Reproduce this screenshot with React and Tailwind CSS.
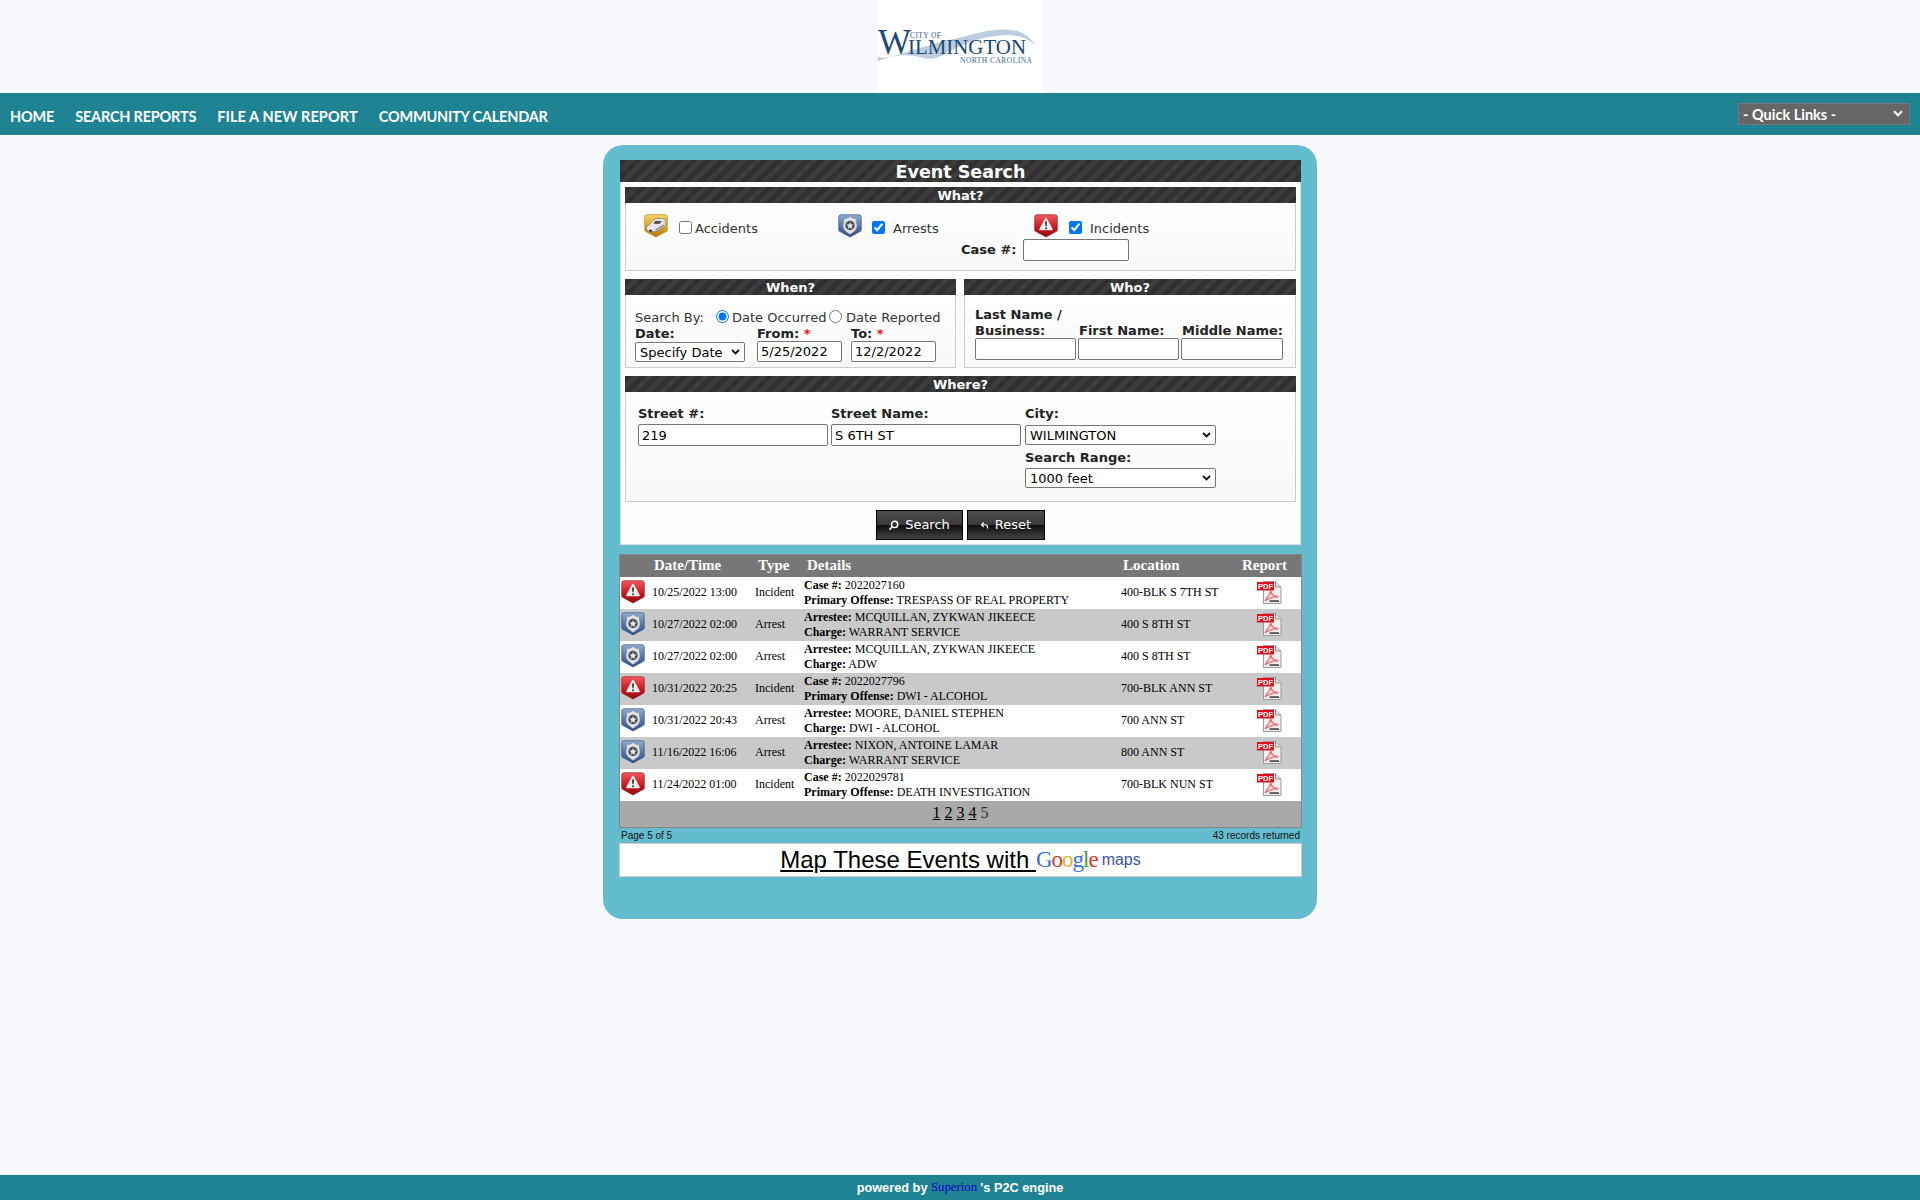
import React from "react";

const F = "font-['DejaVu_Sans','Verdana',sans-serif]";

function Shield({ kind, className }) {
  const c = {
    red: ["#f2585c", "#c8151d", "#8f0b11"],
    blue: ["#8dabd3", "#4d70a6", "#2f4b7a"],
    yellow: ["#f8d565", "#dc9f1c", "#a97608"],
  }[kind];
  const id = "grad-" + kind;
  return (
    <svg viewBox="0 0 24 24" className={className}>
      <defs>
        <linearGradient id={id} x1="0" y1="0" x2="0" y2="1">
          <stop offset="0" stopColor={c[0]} />
          <stop offset=".6" stopColor={c[1]} />
          <stop offset="1" stopColor={c[2]} />
        </linearGradient>
      </defs>
      <path d="M.7 3Q.7 .7 3 .7H21Q23.3 .7 23.3 3V16Q23.3 17 22 17.6L12 23L2 17.6Q.7 17 .7 16Z" fill={`url(#${id})`} stroke={c[2]} strokeWidth=".6" />
      {kind === "red" && (
        <>
          <path d="M12 4.5L18 15.5H6Z" fill="#f1eeee" stroke="#f1eeee" strokeWidth="1.6" strokeLinejoin="round" />
          <path d="M11 7.5H13L12.6 12.3H11.4Z" fill="#2f2f2f" />
          <circle cx="12" cy="14.2" r="1" fill="#2f2f2f" />
        </>
      )}
      {kind === "blue" && (
        <>
          <path d="M5.5 4.5Q9 5 12 2.5Q15 5 18.5 4.5Q17.5 7 19 10.5Q20 16 12 20.5Q4 16 5 10.5Q6.5 7 5.5 4.5Z" fill="#dcdfe3" stroke="#7e838b" strokeWidth=".5" />
          <circle cx="12" cy="11.5" r="4.7" fill="#4e5157" />
          <path d="M12 7.9L13 10.4L15.6 10.5L13.6 12.2L14.3 14.8L12 13.4L9.7 14.8L10.4 12.2L8.4 10.5L11 10.4Z" fill="#ececec" />
        </>
      )}
      {kind === "yellow" && (
        <>
          <path d="M2.5 14Q2.5 11.5 5.5 10.5L9 6.5Q10 5 13 4.5H18.5Q21.5 4.5 21.5 7.5V10.5Q21.5 12 20 13L13.5 17Q11.5 18 8 17.7H4.5Q2.5 17 2.5 14Z" fill="#e6e6e6" stroke="#555" strokeWidth=".5" />
          <path d="M9.5 9.8L11 7H18L15.5 10Z" fill="#555" />
          <path d="M3.5 13.5Q8 12.3 11 13.5L8 15H4Z" fill="#fbfbfb" />
          <path d="M11 15.5L20 10.5V12L12 16.8Z" fill="#8a8a8a" />
          <ellipse cx="6.5" cy="16.8" rx="1.8" ry="1.1" fill="#333" />
        </>
      )}
    </svg>
  );
}

function PdfIcon() {
  return (
    <svg viewBox="0 0 25 23" className="w-[25px] h-[23px] block">
      <path d="M6.5 .5H18.5L24 6V22.5H6.5Z" fill="#efefef" stroke="#9a9a9a" />
      <path d="M18.5 .5V6H24" fill="#d9d9d9" stroke="#9a9a9a" />
      <rect x="0" y="1" width="17" height="8.5" fill="#e0101e" />
      <text x="8.5" y="8" textAnchor="middle" fontFamily="'Liberation Sans',sans-serif" fontWeight="700" fontSize="7.5" fill="#fff">PDF</text>
      <path d="M8 20Q12.5 15 14 9.5Q13.5 15 21.5 16Q14.5 15.5 8 20Z" fill="none" stroke="#ee6a76" strokeWidth="1.3" />
      <rect x="12.5" y="19.2" width="9.5" height="1.8" fill="#555" />
    </svg>
  );
}

function Logo() {
  return (
    <svg viewBox="0 0 165 93" className="w-[165px] h-[93px] block">
      <path d="M0 57Q8 60 28 52Q60 42 92 35Q125 26 142 32Q152 36 157 45Q146 35 128 35Q100 36 70 52Q56 62 42 57Q22 52 0 61Z" fill="#bccddf" />
      <text x="0" y="54" fontFamily="'Liberation Serif',serif" fontSize="35" fill="#1b4a76">W</text>
      <text x="30" y="54" fontFamily="'Liberation Serif',serif" fontSize="22" textLength="118" lengthAdjust="spacingAndGlyphs" fill="#1b4a76">ILMINGTON</text>
      <text x="32" y="38" fontFamily="'Liberation Serif',serif" fontSize="7.5" textLength="31" fill="#2c5a85">CITY OF</text>
      <text x="82" y="63" fontFamily="'Liberation Serif',serif" fontSize="7.5" textLength="72" fill="#3a6a94">NORTH CAROLINA</text>
    </svg>
  );
}

function Bar({ children, big }) {
  return (
    <div
      className={`bg-[repeating-linear-gradient(135deg,#303030_0,#303030_5px,#3c3c3c_5px,#3c3c3c_10px)] text-center text-white font-bold ${F} ${
        big ? "h-[22px] text-[17.5px] leading-[24px]" : "h-4 text-[13px] leading-[18px]"
      }`}
    >
      {children}
    </div>
  );
}

function Chevron({ color, className }) {
  return (
    <svg viewBox="0 0 10 7" className={`absolute pointer-events-none ${className}`} fill="none" stroke={color} strokeWidth="2.2">
      <path d="M1 1.2L5 5.2L9 1.2" />
    </svg>
  );
}

function Sel({ value, className }) {
  return (
    <div className={`relative ${className}`}>
      <select defaultValue={value} className="appearance-none block w-full h-full bg-white border border-[#767676] rounded-[2px] pl-[4px] text-[13px] text-black">
        <option value={value}>{value}</option>
      </select>
      <Chevron color="#111" className="w-[9px] h-[6px] right-[5px] top-[7px]" />
    </div>
  );
}

const inputCls = "block bg-white border border-[#767676] rounded-[2px] px-[3px] text-[13px] text-black";
const labelCls = "font-bold text-[13px] leading-4 text-[#222]";

function Section({ children, className }) {
  return <div className={`border border-t-0 border-[#ccc] bg-gradient-to-b from-white to-[#f8f8f8] ${className}`}>{children}</div>;
}

const rows = [
  ["red", "10/25/2022 13:00", "Incident", "Case #:", "2022027160", "Primary Offense:", "TRESPASS OF REAL PROPERTY", "400-BLK S 7TH ST"],
  ["blue", "10/27/2022 02:00", "Arrest", "Arrestee:", "MCQUILLAN, ZYKWAN JIKEECE", "Charge:", "WARRANT SERVICE", "400 S 8TH ST"],
  ["blue", "10/27/2022 02:00", "Arrest", "Arrestee:", "MCQUILLAN, ZYKWAN JIKEECE", "Charge:", "ADW", "400 S 8TH ST"],
  ["red", "10/31/2022 20:25", "Incident", "Case #:", "2022027796", "Primary Offense:", "DWI - ALCOHOL", "700-BLK ANN ST"],
  ["blue", "10/31/2022 20:43", "Arrest", "Arrestee:", "MOORE, DANIEL STEPHEN", "Charge:", "DWI - ALCOHOL", "700 ANN ST"],
  ["blue", "11/16/2022 16:06", "Arrest", "Arrestee:", "NIXON, ANTOINE LAMAR", "Charge:", "WARRANT SERVICE", "800 ANN ST"],
  ["red", "11/24/2022 01:00", "Incident", "Case #:", "2022029781", "Primary Offense:", "DEATH INVESTIGATION", "700-BLK NUN ST"],
];

const btnCls = `flex items-center justify-center gap-[6px] h-[30px] border border-black bg-[linear-gradient(180deg,#4c4c4c_0%,#3a3a3a_48%,#0f0f0f_52%,#444_100%)] text-white text-[13px] ${F}`;

export default function App() {
  return (
    <div className="min-h-[1200px] flex flex-col bg-[#f8f9ff]">
      <header className="h-[93px] flex justify-center">
        <div className="bg-white w-[165px]">
          <Logo />
        </div>
      </header>

      <nav className="h-[42px] bg-[#1e8494] flex items-center justify-between px-[10px] text-white font-['Lato',sans-serif] font-bold">
        <div className="flex gap-[21px] text-[14.5px] tracking-[-0.2px] pt-[6px]">
          <span>HOME</span>
          <span>SEARCH REPORTS</span>
          <span className="tracking-[0.1px]">FILE A NEW REPORT</span>
          <span>COMMUNITY CALENDAR</span>
        </div>
        <div className="relative w-[172px] h-[22px]">
          <select className="appearance-none block w-full h-full bg-[#666] border border-[#777] pl-[4px] text-white text-[14.5px] font-bold" defaultValue="q">
            <option value="q">- Quick Links -</option>
          </select>
          <Chevron color="#fff" className="w-[10px] h-[7px] right-[7px] top-[7px]" />
        </div>
      </nav>

      <main className="flex-1 flex justify-center items-start">
        <div className="mt-[10px] w-[714px] h-[774px] rounded-[20px] bg-[#64bdce] pt-[15px] pl-[17px] pr-4">
          <Bar big>Event Search</Bar>
          <div className={`h-[363px] bg-[#fcfcfc] border-x border-b border-[#ddd] px-[4px] pt-[5px] ${F} text-[13px] text-[#333]`}>
            <Bar>What?</Bar>
            <Section className="h-[68px] pt-[11px] pl-[18px]">
              <div className="flex h-[23px] items-center">
                <div className="w-[194px] flex items-center">
                  <Shield kind="yellow" className="w-6 h-6 mr-[11px]" />
                  <input type="checkbox" readOnly className="w-[13px] h-[13px] mr-[3px] mt-[4px]" />
                  <span className="pt-[6px]">Accidents</span>
                </div>
                <div className="w-[196px] flex items-center">
                  <Shield kind="blue" className="w-6 h-6 mr-[10px]" />
                  <input type="checkbox" defaultChecked className="w-[13px] h-[13px] mr-[8px] mt-[4px]" />
                  <span className="pt-[6px]">Arrests</span>
                </div>
                <div className="flex items-center">
                  <Shield kind="red" className="w-6 h-6 mr-[11px]" />
                  <input type="checkbox" defaultChecked className="w-[13px] h-[13px] mr-[8px] mt-[4px]" />
                  <span className="pt-[6px]">Incidents</span>
                </div>
              </div>
              <div className="flex items-center gap-[6px] mt-[2px] ml-[317px]">
                <span className={labelCls}>Case #:</span>
                <input className={`${inputCls} w-[106px] h-[22px]`} />
              </div>
            </Section>

            <div className="flex gap-2 mt-2">
              <div className="w-[331px]">
                <Bar>When?</Bar>
                <Section className="h-[73px] pl-[9px] pt-[15px]">
                  <div className="flex items-center h-4">
                    <span className="w-[81px]">Search By:</span>
                    <input type="radio" name="by" defaultChecked className="w-[13px] h-[13px] mr-[3px] -mt-[3px]" />
                    <span className="w-[97px]">Date Occurred</span>
                    <input type="radio" name="by" className="w-[13px] h-[13px] mr-[4px] -mt-[3px]" />
                    <span>Date Reported</span>
                  </div>
                  <div className="grid grid-cols-[122px_94px_1fr]">
                    <span className={labelCls}>Date:</span>
                    <span className={labelCls}>From: <span className="text-[#ee1111]">*</span></span>
                    <span className={labelCls}>To: <span className="text-[#ee1111]">*</span></span>
                    <Sel value="Specify Date" className="w-[110px] h-5" />
                    <input defaultValue="5/25/2022" className={`${inputCls} w-[85px] h-[21px] -mt-px`} />
                    <input defaultValue="12/2/2022" className={`${inputCls} w-[85px] h-[21px] -mt-px`} />
                  </div>
                </Section>
              </div>
              <div className="w-[332px]">
                <Bar>Who?</Bar>
                <Section className="h-[73px] pl-[10px] pt-3">
                  <div className="grid grid-cols-[103px_103px_1fr] items-end">
                    <span className={labelCls}>Last Name /<br />Business:</span>
                    <span className={`${labelCls} pl-px`}>First Name:</span>
                    <span className={`${labelCls} pl-px`}>Middle Name:</span>
                    <input className={`${inputCls} w-[101px] h-[22px] -mt-px`} />
                    <input className={`${inputCls} w-[101px] h-[22px] -mt-px`} />
                    <input className={`${inputCls} w-[102px] h-[22px] -mt-px`} />
                  </div>
                </Section>
              </div>
            </div>

            <div className="mt-2">
              <Bar>Where?</Bar>
              <Section className="h-[110px] pl-3 pt-[14px]">
                <div className="grid grid-cols-[193px_194px_191px]">
                  <span className={labelCls}>Street #:</span>
                  <span className={labelCls}>Street Name:</span>
                  <span className={labelCls}>City:</span>
                  <input defaultValue="219" className={`${inputCls} w-[190px] h-[22px] mt-[2px]`} />
                  <input defaultValue="S 6TH ST" className={`${inputCls} w-[190px] h-[22px] mt-[2px]`} />
                  <Sel value="WILMINGTON" className="w-[191px] h-5 mt-[3px]" />
                  <span className={`${labelCls} col-start-3 mt-[4px]`}>Search Range:</span>
                  <Sel value="1000 feet" className="col-start-3 w-[191px] h-5 mt-[2px]" />
                </div>
              </Section>
            </div>

            <div className="flex justify-center gap-[4px] mt-2 -ml-px">
              <button className={`${btnCls} w-[87px]`}>
                <svg viewBox="0 0 12 12" className="w-[11px] h-[11px]" fill="none" stroke="#fff" strokeWidth="1.6"><circle cx="7.2" cy="4.8" r="3.4" /><path d="M4.7 7.3L1.5 10.5" /></svg>
                <span>Search</span>
              </button>
              <button className={`${btnCls} w-[78px]`}>
                <svg viewBox="0 0 12 12" className="w-[9px] h-[9px]" fill="none" stroke="#fff" strokeWidth="1.5"><path d="M5 2L2 5L5 8" /><path d="M2.5 5H7Q10 5 10 8V10" /></svg>
                <span>Reset</span>
              </button>
            </div>
          </div>

          <div className="mt-[9px] -mx-px border border-[#858585] font-['Liberation_Serif',serif] text-[12px] text-black">
            <table className="w-full table-fixed border-collapse">
              <colgroup>
                <col className="w-[31px]" />
                <col className="w-[103px]" />
                <col className="w-[49px]" />
                <col className="w-[317px]" />
                <col className="w-[117px]" />
                <col />
              </colgroup>
              <thead>
                <tr className="h-[22px] bg-[#777] text-white text-[15px] leading-[20px] font-bold text-left">
                  <th></th>
                  <th className="pl-[3px] pb-[2px]">Date/Time</th>
                  <th className="pl-[4px] pb-[2px]">Type</th>
                  <th className="pl-1 pb-[2px]">Details</th>
                  <th className="pl-[3px] pb-[2px]">Location</th>
                  <th className="pl-[5px] pb-[2px]">Report</th>
                </tr>
              </thead>
              <tbody>
                {rows.map((r, i) => (
                  <tr key={i} className={`h-8 ${i % 2 ? "bg-[#c9c9c9]" : "bg-white"}`}>
                    <td className="pl-px pb-[3px]"><Shield kind={r[0]} className="w-6 h-6 block" /></td>
                    <td className="pl-px pb-[2px] whitespace-nowrap">{r[1]}</td>
                    <td className="pl-px pb-[2px]">{r[2]}</td>
                    <td className="pl-px leading-[15px] whitespace-nowrap">
                      <b>{r[3]}</b> {r[4]}<br /><b>{r[5]}</b> {r[6]}
                    </td>
                    <td className="pl-px pb-[2px]">{r[7]}</td>
                    <td className="pl-[20px] pb-[2px]"><PdfIcon /></td>
                  </tr>
                ))}
              </tbody>
            </table>
            <div className="h-[26px] bg-[#a9a9a9] text-center text-[16px] leading-[24px] text-[#333]">
              <u className="text-black">1</u> <u className="text-black">2</u> <u className="text-black">3</u> <u className="text-black">4</u> 5
            </div>
          </div>

          <div className="flex justify-between items-center h-[15px] px-[1px] font-['Liberation_Sans',sans-serif] text-[10px] text-[#111]">
            <span>Page 5 of 5</span>
            <span>43 records returned</span>
          </div>

          <div className="-mx-px h-[34px] bg-white border border-[#ccc] flex items-center justify-center font-['Liberation_Sans',sans-serif] text-[24px] text-black">
            <u className="whitespace-pre">Map These Events with </u>
            <span className="font-['Liberation_Serif',serif] text-[23px] tracking-[-1px]">
              <span className="text-[#3b6fe0]">G</span><span className="text-[#d6382e]">o</span><span className="text-[#e3b21c]">o</span><span className="text-[#3b6fe0]">g</span><span className="text-[#3aa24a]">l</span><span className="text-[#d6382e]">e</span>
            </span>
            <span className="ml-[4px] text-[16px] text-[#3a52a8]">maps</span>
          </div>
        </div>
      </main>

      <footer className="h-[25px] bg-[#1e8494] flex items-center justify-center text-white text-[12.75px] font-bold font-['Liberation_Sans',sans-serif] whitespace-pre">
        powered by <span className="font-['Liberation_Serif',serif] font-normal text-[#0000cc]">Superion </span>'s P2C engine
      </footer>
    </div>
  );
}
